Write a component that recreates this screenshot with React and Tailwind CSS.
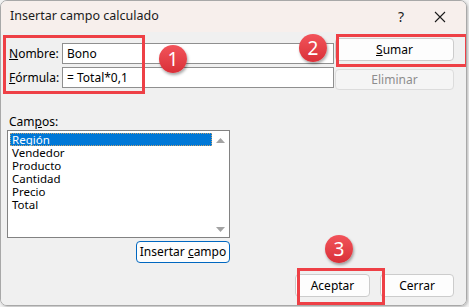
import React from 'react';

const font = { fontFamily: '"Noto Sans", "Open Sans", sans-serif' };

const Badge = ({ n, className }) => (
    <div className={`absolute w-[28px] h-[28px] rounded-full bg-gradient-to-b from-[#f2535a] to-[#d92f38] shadow-[1px_2px_3px_rgba(0,0,0,0.35)] flex items-center justify-center text-white text-[19px] leading-none ${className}`}>
        {n}
    </div>
);

const fields = ["Región", "Vendedor", "Producto", "Cantidad", "Precio", "Total"];

export default function App() {
    return (
        <div className="w-[469px] h-[307px] bg-[#f3f3f3] relative overflow-hidden text-[12px] text-black" style={font}>
            <div className="w-[467px] h-[306px] rounded-[7px] border border-[#a8a8a8] overflow-hidden flex flex-col shadow-[1px_1px_3px_rgba(0,0,0,0.25)]">
                {/* title bar */}
                <div className="h-[31px] bg-[#f7efec] flex items-center pl-[9px] shrink-0">
                    <span className="text-[12.5px] text-[#1b1b1b]">Insertar campo calculado</span>
                    <span className="ml-auto text-[14px] text-[#1b1b1b] mr-[30px]">?</span>
                    <svg width="12" height="12" viewBox="0 0 12 12" className="mr-[20px]">
                        <path d="M1 1 L11 11 M11 1 L1 11" stroke="#1b1b1b" strokeWidth="1.1" fill="none" />
                    </svg>
                </div>

                {/* body */}
                <div className="flex-1 bg-[#f0f0f0] relative px-[6px] pt-[6px]">
                    <div className="flex">
                        <div className="flex flex-col gap-[3px] mt-[5px]">
                            <div className="flex items-center">
                                <span className="w-[55px] pl-[2px]"><u>N</u>ombre:</span>
                                <div className="w-[272px] h-[21px] bg-white border border-[#8f8f8f] flex items-center pl-[4px]">Bono</div>
                            </div>
                            <div className="flex items-center">
                                <span className="w-[55px] pl-[2px]"><u>F</u>órmula:</span>
                                <div className="w-[272px] h-[21px] bg-white border border-[#8f8f8f] flex items-center pl-[4px]">= Total*0,1</div>
                            </div>
                        </div>
                        <div className="ml-auto mr-[6px] w-[119px] flex flex-col gap-[8px]">
                            <button className="h-[23px] bg-[#fdfdfd] border border-[#cccccc] rounded-[4px] flex items-center justify-center">
                                <span><u>S</u>umar</span>
                            </button>
                            <button className="h-[21px] bg-[#f5f5f5] border border-[#dcdcdc] rounded-[4px] text-[#8d8d8d] flex items-center justify-center">Eliminar</button>
                        </div>
                    </div>

                    <div className="mt-[25px] pl-[2px] leading-[14px]">Cam<u>p</u>os:</div>
                    <div className="w-[223px] mt-[1px]">
                        <div className="h-[108px] bg-white border border-[#828282] flex pl-[2px] pt-[2px]">
                            <div className="flex-1 flex flex-col">
                                {fields.map((f, i) => (
                                    <div key={f} className={`h-[13px] leading-[13px] text-[11.5px] pl-[2px] ${i === 0 ? 'bg-[#0078d7] text-white outline-1 outline-dotted outline-[#c0a070] -outline-offset-1' : ''}`}>{f}</div>
                                ))}
                            </div>
                            <div className="w-[17px] flex flex-col items-center justify-between py-[5px]">
                                <svg width="9" height="5" viewBox="0 0 9 5"><path d="M0 5 L4.5 0 L9 5 Z" fill="#a3a3a3" /></svg>
                                <svg width="9" height="5" viewBox="0 0 9 5"><path d="M0 0 L4.5 5 L9 0 Z" fill="#a3a3a3" /></svg>
                            </div>
                        </div>
                        <div className="flex justify-end mt-[3px]">
                            <button className="w-[94px] h-[22px] bg-[#fdfdfd] border border-[#0067c0] rounded-[4px] flex items-center justify-center">
                                <span>Insertar <u>c</u>ampo</span>
                            </button>
                        </div>
                    </div>

                    <div className="flex justify-end gap-[10px] mt-[11px] mr-[6px]">
                        <button className="w-[75px] h-[23px] bg-[#fdfdfd] border border-[#cccccc] rounded-[4px]">Aceptar</button>
                        <button className="w-[74px] h-[23px] bg-[#fdfdfd] border border-[#cccccc] rounded-[4px]">Cerrar</button>
                    </div>

                    {/* annotations */}
                    <div className="absolute left-[2px] top-[3px] w-[142px] h-[59px] border-[3px] border-[#ee4046]" />
                    <div className="absolute left-[335px] top-[2px] w-[132px] h-[33px] border-[3px] border-[#ee4046]" />
                    <div className="absolute left-[296px] top-[236px] w-[88px] h-[37px] border-[3px] border-[#ee4046]" />
                </div>
            </div>
            <Badge n="1" className="left-[159px] top-[45px]" />
            <Badge n="2" className="left-[299px] top-[34px]" />
            <Badge n="3" className="left-[325px] top-[235px]" />
        </div>
    );
}
